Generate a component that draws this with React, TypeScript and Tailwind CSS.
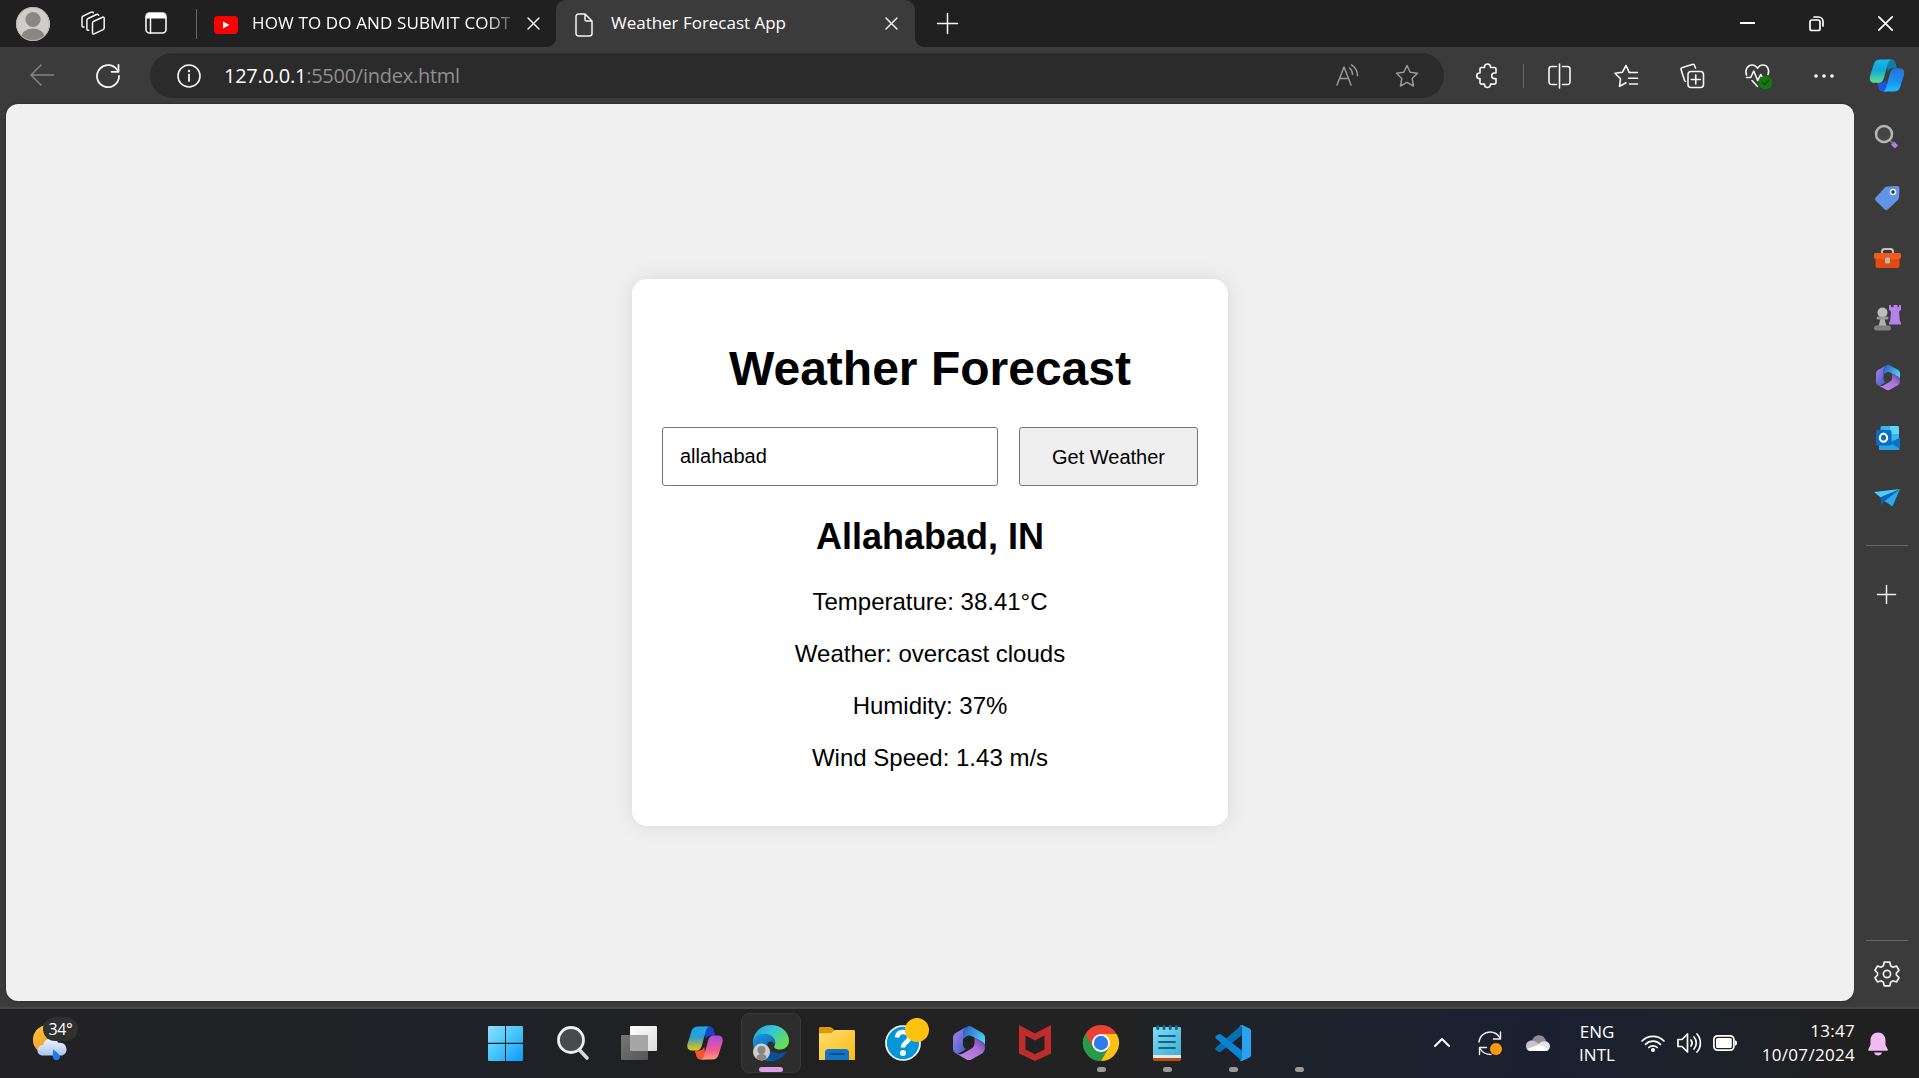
import type { ReactNode } from "react";

type IconProps = { w: number; h: number; className?: string; children: ReactNode };

function Icon({ w, h, className = "", children }: IconProps) {
  return (
    <svg
      width={w}
      height={h}
      viewBox={`0 0 ${w} ${h}`}
      fill="none"
      strokeLinecap="round"
      strokeLinejoin="round"
      className={`block shrink-0 overflow-visible ${className}`}
    >
      {children}
    </svg>
  );
}

const CloseIcon = ({ className }: { className?: string }) => (
  <Icon w={13} h={13} className={className}>
    <path d="M1 1l11 11M12 1L1 12" stroke="#f2f2f2" strokeWidth="1.5" />
  </Icon>
);

function Flare({ side }: { side: "left" | "right" }) {
  return (
    <svg
      width="9"
      height="9"
      viewBox="0 0 9 9"
      className={side === "left" ? "absolute bottom-0 -left-[9px]" : "absolute bottom-0 -right-[9px] -scale-x-100"}
    >
      <path d="M9 0V9H0A9 9 0 0 0 9 0Z" fill="#3b3b3b" />
    </svg>
  );
}

function TabStrip() {
  return (
    <div className="flex h-[47px] shrink-0 items-center bg-[#202020] text-[17px] text-white">
      <Icon w={34} h={34} className="ml-4">
        <defs>
          <clipPath id="avatar">
            <circle cx="17" cy="17" r="17" />
          </clipPath>
        </defs>
        <g clipPath="url(#avatar)">
          <rect width="34" height="34" fill="#cfccc9" />
          <circle cx="17" cy="12.5" r="7.6" fill="#8a8683" />
          <ellipse cx="17" cy="30" rx="11.5" ry="8.5" fill="#8a8683" />
        </g>
        <circle cx="17" cy="17" r="16.5" stroke="#b5b2af" />
      </Icon>
      <Icon w={24} h={24} className="-mt-px ml-[31px]">
        <g stroke="#f5f5f5" strokeWidth="1.5">
          <path d="M12.3 10.5l9.2-4.3c.9-.4 1.7 0 1.7 1v9.6c0 .8-.4 1.4-1.1 1.8l-9 4.3c-.9.4-1.6 0-1.6-1V12.400c0-.9.1-1.500.8-1.900z" />
          <path d="M7.800 19.200c-1.200.4-1.900 0-1.900-1.200V9.500c0-1 .4-1.600 1.200-2l8.400-4c1-.4 1.800-.2 2.100.8" />
          <path d="M3 16c-1.300.3-2 0-2-1.200V7c0-1 .4-1.600 1.200-2l8.100-3.900c1-.4 1.800-.2 2 .7" />
        </g>
      </Icon>
      <Icon w={22} h={22} className="-mt-px ml-10">
        <rect x="1" y="1" width="20" height="20" rx="3.500" stroke="#f5f5f5" strokeWidth="1.600" />
        <path d="M1 6.500V4a3 3 0 0 1 3-3h14a3 3 0 0 1 3 3v2.500z" fill="#fff" />
        <path d="M5.500 6v15" stroke="#f5f5f5" strokeWidth="1.500" />
      </Icon>
      <div className="ml-[29px] h-[30px] w-px bg-[#666]" />
      <Icon w={24} h={18} className="ml-[17px] mt-0.5">
        <rect width="24" height="18" rx="4" fill="#f00" />
        <path d="M9 5.500v7l6.500-3.500z" fill="#fff" />
      </Icon>
      <div className="ml-[14px] w-[261px] whitespace-nowrap pb-0.5 tracking-[0.13px] [mask-image:linear-gradient(to_right,#000_90%,transparent_102%)]">
        HOW TO DO AND SUBMIT CODT
      </div>
      <CloseIcon className="ml-[14px]" />
      <div className="relative ml-4 flex h-full w-[359px] items-center rounded-t-[10px] bg-[#3b3b3b]">
        <Flare side="left" />
        <Icon w={18} h={24} className="ml-[19px] mt-0.5">
          <path d="M3.500 1H10l7 7v12.500a2.500 2.500 0 0 1-2.500 2.500h-11A2.500 2.500 0 0 1 1 20.500v-17A2.500 2.500 0 0 1 3.500 1zM10 1v5.500A1.500 1.500 0 0 0 11.500 8H17" stroke="#f5f5f5" strokeWidth="1.500" />
        </Icon>
        <div className="ml-[18px] w-[200px] whitespace-nowrap pb-0.5 tracking-[-0.02px]">Weather Forecast App</div>
        <CloseIcon className="ml-[74px]" />
        <Flare side="right" />
      </div>
      <Icon w={21} h={21} className="-mt-px ml-[22px]">
        <path d="M10.500.5v20M.5 10.500h20" stroke="#f5f5f5" strokeWidth="1.500" />
      </Icon>
      <div className="ml-auto mr-[26px] flex items-center gap-[54px] pb-px">
        <Icon w={15} h={15}>
          <path d="M0 7h15" stroke="#fff" strokeWidth="2" strokeLinecap="butt" />
        </Icon>
        <Icon w={15} h={15}>
          <rect x="1" y="4" width="10" height="10.500" rx="2" stroke="#fff" strokeWidth="1.700" />
          <path d="M5 1h4.500A4.500 4.500 0 0 1 14 5.500V10" stroke="#fff" strokeWidth="1.700" />
        </Icon>
        <Icon w={15} h={15}>
          <path d="M.8.8l13.400 13.400M14.200.8L.8 14.200" stroke="#fff" strokeWidth="1.700" />
        </Icon>
      </div>
    </div>
  );
}

function CopilotMark({ w, h, id, tones }: { w: number; h: number; id: string; tones: string[] }) {
  return (
    <svg width={w} height={h} viewBox="0 0 36 34" className="block shrink-0">
      <defs>
        <linearGradient id={`${id}a`} x1="0" y1="0" x2="0" y2="1">
          <stop offset="0" stopColor={tones[0]} />
          <stop offset=".45" stopColor={tones[1]} />
          <stop offset="1" stopColor={tones[2]} />
        </linearGradient>
        <linearGradient id={`${id}b`} x1="0" y1="0" x2="0" y2="1">
          <stop offset="0" stopColor={tones[3]} />
          <stop offset=".6" stopColor={tones[4]} />
          <stop offset="1" stopColor={tones[5]} />
        </linearGradient>
      </defs>
      <path d="M17 .5h5.500c2.500 0 3.600 1.500 4.300 4l1.400 5H24c-3 0-4.500 1.500-5.200 4z" fill={tones[6]} />
      <path d="M19 33.500h-5.500c-2.500 0-3.600-1.500-4.300-4l-1.400-5H12c3 0 4.500-1.500 5.200-4z" fill={tones[7]} />
      <path d="M11.500.5h12c-2.700 0-3.900 1.700-4.700 4.500L15 19c-1.200 4-2.500 5.500-6 5.500H5C1 24.500-.5 21.500.6 17.500L4.500 5C5.500 2 7.500.5 11.500.5z" fill={`url(#${id}a)`} />
      <path d="M24.500 33.500h-12c2.700 0 3.900-1.700 4.700-4.500L21 15c1.200-4 2.500-5.500 6-5.500h4c4 0 5.500 3 4.400 7L31.500 29c-1 3-3 4.500-7 4.500z" fill={`url(#${id}b)`} />
    </svg>
  );
}

const starPath = "M12 1.500l3.200 6.800 7.300 1-5.300 5.200 1.300 7.500-6.500-3.600L5.500 22l1.300-7.500L1.500 9.300l7.300-1z";

function Toolbar() {
  return (
    <div className="flex h-[57px] shrink-0 items-center bg-[#3b3b3b]">
      <Icon w={24} h={22} className="-mt-px ml-[30px]">
        <path d="M23.500 11H1M11 1L1 11l10 10" stroke="#858585" strokeWidth="1.500" />
      </Icon>
      <Icon w={24} h={24} className="ml-[42px]">
        <path d="M22 7.500A11 11 0 1 0 23 12" stroke="#f5f5f5" strokeWidth="1.800" />
        <path d="M22.500.8v7H15.500" stroke="#f5f5f5" strokeWidth="1.800" />
      </Icon>
      <div className="ml-[30px] flex h-[45px] w-[1294px] items-center rounded-full bg-[#2b2b2b]">
        <Icon w={24} h={24} className="ml-[27px]">
          <circle cx="12" cy="12" r="11" stroke="#f5f5f5" strokeWidth="1.600" />
          <path d="M12 10.500V17" stroke="#f5f5f5" strokeWidth="1.800" />
          <circle cx="12" cy="7" r="1.200" fill="#f5f5f5" />
        </Icon>
        <div className="ml-[23px] whitespace-nowrap text-[20px] tracking-[-0.25px] text-[#8f8f8f]">
          <span className="text-white">127.0.0.1</span>:5500/index.html
        </div>
        <Icon w={23} h={22} className="ml-auto -mt-0.5">
          <path d="M1 21L8 3l7 18M3.500 14.500h9" stroke="#999" strokeWidth="1.500" />
          <path d="M13.500 4c2 1.500 3 3.500 3 6.500M15.500.8c4 2.500 6 6 6 11" stroke="#999" strokeWidth="1.500" />
        </Icon>
        <Icon w={24} h={24} className="mr-[25px] ml-9">
          <path d={starPath} stroke="#999" strokeWidth="1.500" />
        </Icon>
      </div>
      <Icon w={22} h={25} className="ml-[31px] mr-px">
        <path d="M6.500 4.500h3V4a3 3 0 0 1 6 0v.5h4a1.500 1.500 0 0 1 1.500 1.500v4h-1.500a2.800 2.800 0 0 0 0 5.600H21v4a1.500 1.500 0 0 1-1.500 1.500h-4v.4a3 3 0 0 1-6 0v-.4h-3A1.500 1.500 0 0 1 5 19.600v-4h-.5a2.800 2.800 0 0 1 0-5.600H5V6a1.500 1.500 0 0 1 1.500-1.500z" stroke="#f5f5f5" strokeWidth="1.600" />
      </Icon>
      <div className="ml-[25px] mr-px h-6 w-px bg-[#666]" />
      <Icon w={23} h={25} className="ml-[23px]">
        <path d="M8.500 3.500h-5A2.500 2.500 0 0 0 1 6v13a2.500 2.500 0 0 0 2.500 2.500h5M14.500 3.500h5A2.500 2.500 0 0 1 22 6v13a2.500 2.500 0 0 1-2.500 2.500h-5M11.500 1v24" stroke="#f5f5f5" strokeWidth="1.600" />
      </Icon>
      <Icon w={24} h={24} className="ml-[43px]">
        <path d="M8 21l-2.500 1.300 1-7.500L1 9.300l7.300-1L12 1.500l3.200 6.800M15 8.500h8.500M14.500 14.200h9M15.500 20h8M12 18.800l-4 2.200" stroke="#f5f5f5" strokeWidth="1.600" />
      </Icon>
      <Icon w={24} h={25} className="ml-[42px]">
        <rect x="8" y="8.500" width="15.500" height="16" rx="3" stroke="#f5f5f5" strokeWidth="1.600" />
        <path d="M15.750 12v9M11.250 16.500h9M15.500 5l-.8-2.300a2 2 0 0 0-2.500-1.300L2.500 4.500A2 2 0 0 0 1.200 7l3.300 10.300a2 2 0 0 0 1 1.100" stroke="#f5f5f5" strokeWidth="1.600" />
      </Icon>
      <Icon w={28} h={26} className="ml-[41px] mr-px">
        <path d="M12.500 23.500L7 17.500M1.500 12C-.5 6.500 3 2 7 2c2.500 0 4.500 1.500 5.500 3.500C13.500 3.500 15.500 2 18 2c4 0 7 4.500 5 9.500" stroke="#f5f5f5" strokeWidth="1.600" />
        <path d="M1.500 14.500h4.200l3-6.500 4 9.500 3-6 1.300 2" stroke="#f5f5f5" strokeWidth="1.600" />
        <circle cx="20.500" cy="19.500" r="6.800" fill="#107c10" />
        <path d="M17.500 19.700l2 2 4-4.300" stroke="#1e3c1e" strokeWidth="1.500" />
      </Icon>
      <Icon w={20} h={4} className="ml-10">
        <g fill="#fff">
          <circle cx="2" cy="2" r="1.800" />
          <circle cx="10" cy="2" r="1.800" />
          <circle cx="18" cy="2" r="1.800" />
        </g>
      </Icon>
      <div className="ml-[35px]">
        <CopilotMark w={36} h={33} id="cop" tones={["#19b9e8", "#10a6dc", "#63e08b", "#2a6fdc", "#1a93f0", "#1ac0ff", "#0d7fa8", "#2453e0"]} />
      </div>
    </div>
  );
}

function WeatherCard() {
  return (
    <div className="w-[596px] rounded-[15px] bg-white p-[30px] text-center text-2xl leading-[28px] text-black shadow-[0_0_20px_rgba(0,0,0,0.1)]">
      <h1 className="mt-8 mb-[31px] text-[48px] leading-[55px] font-bold">Weather Forecast</h1>
      <div className="flex justify-between text-[20px]">
        <input
          readOnly
          value="allahabad"
          className="h-[59px] w-[336px] rounded-[3px] border border-[#767676] bg-white px-[17px] outline-none"
        />
        <button className="h-[59px] w-[179px] rounded-[3px] border border-[#767676] bg-[#efefef]">Get Weather</button>
      </div>
      <h2 className="mt-[30px] mb-[31px] text-[36px] leading-[41px] font-bold">Allahabad, IN</h2>
      <div className="mb-6 flex flex-col gap-6">
        <p>Temperature: 38.41°C</p>
        <p>Weather: overcast clouds</p>
        <p>Humidity: 37%</p>
        <p>Wind Speed: 1.43 m/s</p>
      </div>
    </div>
  );
}

function M365Mark({ w, h, id }: { w: number; h: number; id: string }) {
  return (
    <svg width={w} height={h} viewBox="0 0 32 34" className="block shrink-0">
      <defs>
        <linearGradient id={`${id}l`} x1="0" y1="0" x2="1" y2="1">
          <stop offset="0" stopColor="#b67fe6" />
          <stop offset="1" stopColor="#2b5fc4" />
        </linearGradient>
        <linearGradient id={`${id}t`} x1="0" y1="0" x2="1" y2=".6">
          <stop offset="0" stopColor="#2a55c0" />
          <stop offset="1" stopColor="#46d3f5" />
        </linearGradient>
        <linearGradient id={`${id}b`} x1="0" y1="1" x2="1" y2="0">
          <stop offset="0" stopColor="#c58bea" />
          <stop offset=".6" stopColor="#a873d6" />
          <stop offset="1" stopColor="#5d3596" />
        </linearGradient>
      </defs>
      <path d="M14 .6L3 6.800C1 8 0 9.500 0 11.800v10.700c0 2.300 1 4 3 5l1.500.8 8.500-5c-2-1.200-3-2.800-3-5V8.500C10 4.500 11.500 2.500 14 .6z" fill={`url(#${id}l)`} />
      <path d="M10 13V8.500C10 4 12.500 1.500 14.500.4c1.200-.6 2.500-.5 3.700.2L29 6.800c2 1.200 3 2.700 3 5V20c-.3-2-1.300-3.300-3-4.300l-10-5.500c-2-1-4-.9-6 .3z" fill={`url(#${id}t)`} />
      <path d="M21.500 17v-5.400l7.500 4.200c4 2.400 4 9.200 0 11.600l-10.500 6c-1.700.9-3.400.9-5 0L3.500 27.800c2.500 1 4.700.8 7-.5l8-4.700c2-1.200 3-3 3-5.600z" fill={`url(#${id}b)`} />
    </svg>
  );
}

function Sidebar() {
  return (
    <div className="flex w-[65px] shrink-0 flex-col items-center bg-[#3b3b3b] pl-px">
      <Icon w={24} h={24} className="mt-[21px]">
        <path d="M17.500 18l4 4" stroke="#b47de8" strokeWidth="4.500" strokeLinecap="butt" />
        <path d="M15 15.500l2.500 2.500" stroke="#777" strokeWidth="2" />
        <circle cx="9" cy="9" r="8" stroke="#b5b5b5" strokeWidth="2.600" fill="#454545" />
      </Icon>
      <Icon w={25} h={24} className="mt-[37px] ml-px">
        <path d="M12 .5L22 0c1.600 0 2.500.9 2.500 2.500L24 11.500c0 1-.4 1.800-1.100 2.500L13 23.200c-1.200 1.100-2.500 1.100-3.600 0L1 15c-1.200-1.200-1.200-2.500 0-3.700L9.500 2C10.200 1 11 .6 12 .5z" fill="#6294e6" />
        <circle cx="18" cy="6" r="2.500" fill="#234" stroke="#e5eefc" strokeWidth="1.500" />
      </Icon>
      <Icon w={27} h={20} className="mt-[38px]">
        <path d="M8 5V3.500C8 2 9 1 10.500 1h6C18 1 19 2 19 3.500V5" stroke="#c4c4c4" strokeWidth="2" />
        <path d="M1.500 10h24v8c0 1.200-.8 2-2 2h-20c-1.200 0-2-.8-2-2z" fill="#e4490f" />
        <path d="M1.500 5h24c.8 0 1.500.7 1.500 1.500V9c0 1-.9 2-2 2H2c-1.100 0-2-1-2-2V6.500C0 5.700.7 5 1.500 5z" fill="#f05a1c" />
        <rect x="11" y="9.500" width="5" height="6" rx="1.500" fill="#b9b9b9" />
      </Icon>
      <Icon w={27} h={27} className="mt-[36px]">
        <path d="M15 1h2v2h2.500V1h4v2H25V1h2v5l-2 1.500.8 9L27 19v1.500H15V19l1.200-2.500.8-9L15 6z" fill="#b583e8" />
        <circle cx="8.500" cy="8.500" r="5" fill="#bdbdbd" />
        <path d="M4.500 22l2.500-9h3l2.500 9z" fill="#b0b0b0" />
        <rect x="2.500" y="12.500" width="12" height="3" rx="1.500" fill="#999" />
        <rect x="0" y="21.500" width="17" height="5" rx="2.500" fill="#808080" />
      </Icon>
      <div className="mt-[33px] ml-px">
        <M365Mark w={24} h={27} id="ms" />
      </div>
      <Icon w={24} h={24} className="mt-[35px] ml-px">
        <rect x="4.500" y="0" width="18.500" height="16" rx="1.500" fill="#34b5ee" />
        <path d="M14 0h7.500A1.500 1.500 0 0 1 23 1.500V8h-9z" fill="#5fd4fb" />
        <path d="M3 14h20.500v9c0 .6-.4 1-1 1H4c-.6 0-1-.4-1-1z" fill="#27a3e3" />
        <path d="M24 11.500V23L14 17z" fill="#0f72c0" />
        <rect x="0" y="4" width="15.500" height="15.500" rx="1.500" fill="#0a6cc4" />
        <ellipse cx="7.500" cy="11.700" rx="3.600" ry="4" stroke="#fff" strokeWidth="2.200" />
      </Icon>
      <Icon w={26} h={18} className="mt-[39px]">
        <path d="M0 3L26 0 8 9.500z" fill="#4bcdf8" />
        <path d="M7 8L26 0 11 12l-4 4.500z" fill="#0a62b0" />
        <path d="M26 0L18.500 17.500 10.500 12z" fill="#27a9ec" />
      </Icon>
      <div className="mt-[38px] h-px w-[42px] bg-[#666]" />
      <Icon w={19} h={19} className="mt-[39px] mr-0.5">
        <path d="M9.500.5v18M.5 9.500h18" stroke="#f0f0f0" strokeWidth="1.500" />
      </Icon>
      <div className="mt-auto h-px w-[42px] bg-[#666]" />
      <Icon w={26} h={26} className="mt-[20px] mb-[22px]">
        <path
          d="M10.200 1.200h5.600l.8 3.600 2.400 1.400 3.500-1.200 2.500 4.300-2.600 2.700v2l2.600 2.700-2.500 4.300-3.500-1.200-2.400 1.400-.8 3.600h-5.600l-.8-3.600L7 19.800 3.500 21 1 16.700 3.600 14v-2L1 9.300 3.500 5 7 6.200l2.400-1.400z"
          stroke="#ededed"
          strokeWidth="1.700"
        />
        <circle cx="13" cy="13" r="3.600" stroke="#ededed" strokeWidth="1.700" />
      </Icon>
    </div>
  );
}

function TaskSlot({ children, running = false }: { children?: ReactNode; running?: boolean }) {
  return (
    <div className="relative flex h-full w-[66px] items-center justify-center pb-px">
      {children}
      {running && <div className="absolute bottom-[6px] left-[29px] h-[5px] w-[9px] rounded-full bg-[#9a9a9a]" />}
    </div>
  );
}

function Taskbar() {
  return (
    <div className="flex h-[69px] shrink-0 items-center bg-[linear-gradient(90deg,#222224_0%,#202124_12%,#1e2127_25%,#212122_35%,#222222_58%,#1c222c_68%,#1b2030_80%,#1c212c_88%,#202021_95%,#202020_100%)] text-[17px] text-white">
      <div className="relative ml-8 h-[45px] w-[48px]">
        <Icon w={34} h={37} className="absolute top-1 left-px">
          <defs>
            <linearGradient id="moon" x1="0" y1="0" x2="1" y2="1">
              <stop offset="0" stopColor="#ffc93d" />
              <stop offset="1" stopColor="#ee8420" />
            </linearGradient>
            <linearGradient id="cloud" x1="0" y1="0" x2="0" y2="1">
              <stop offset="0" stopColor="#f0f5ff" />
              <stop offset="1" stopColor="#a9c4f0" />
            </linearGradient>
          </defs>
          <path d="M11 .5C3 3 0 9 0 15c0 8 6 13.500 14 13.500 7 0 13-3 16-9.500-12 1-20-6-19-18.500z" fill="url(#moon)" />
          <path d="M10 30.500c-3 0-5.500-1.500-5.500-5s2.800-5.500 5.800-5.500C11 16 14 13.500 18 13.500c3.300 0 6 1.700 7.300 4.300C30 17 33.500 20 33.500 24.200c0 4-2.500 6.300-6 6.300z" fill="url(#cloud)" />
          <path d="M20 24.500c3 2 7 4.500 7 8a3.700 3.700 0 0 1-7 .5z" fill="#1c7bf5" />
        </Icon>
        <div className="absolute -top-1 left-[11px] flex h-[24px] w-[35px] items-center justify-center rounded-full bg-[#303030] pb-px text-[16px] tracking-[-0.3px]">
          34°
        </div>
      </div>
      <div className="ml-[394px] flex h-full">
        <TaskSlot>
          <Icon w={35} h={35} className="mr-[3px]">
            <defs>
              <linearGradient id="win" gradientUnits="userSpaceOnUse" x1="0" y1="0" x2="35" y2="35">
                <stop offset="0" stopColor="#8fe0ff" />
                <stop offset=".45" stopColor="#4cc9fb" />
                <stop offset="1" stopColor="#0d98fa" />
              </linearGradient>
            </defs>
            <path d="M1 0h16v16.800H0V1a1 1 0 0 1 1-1zM18 0h16a1 1 0 0 1 1 1v15.800H18zM0 18h17v17H1a1 1 0 0 1-1-1zM18 18h17v16a1 1 0 0 1-1 1H18z" fill="url(#win)" />
          </Icon>
        </TaskSlot>
        <TaskSlot>
          <Icon w={32} h={34}>
            <path d="M22.500 24l7.500 8" stroke="#d5d9dc" strokeWidth="3.600" />
            <circle cx="14" cy="14" r="12.500" stroke="#eceeef" strokeWidth="2.800" fill="#4a4a4c" />
          </Icon>
        </TaskSlot>
        <TaskSlot>
          <Icon w={36} h={34}>
            <defs>
              <linearGradient id="tv1" x1="0" y1="0" x2="1" y2="1">
                <stop offset="0" stopColor="#fff" />
                <stop offset="1" stopColor="#dcdcdc" />
              </linearGradient>
              <linearGradient id="tv2" x1="0" y1="0" x2="1" y2="1">
                <stop offset="0" stopColor="#757575" />
                <stop offset="1" stopColor="#565656" />
              </linearGradient>
            </defs>
            <rect x="9" y="0" width="27" height="25" rx="1" fill="url(#tv1)" />
            <rect x="0" y="9" width="27" height="25" rx="1" fill="url(#tv2)" />
            <path d="M9 9h17a1 1 0 0 1 1 1v15H10a1 1 0 0 1-1-1z" fill="#a6a6a6" />
          </Icon>
        </TaskSlot>
        <TaskSlot>
          <CopilotMark w={36} h={34} id="copt" tones={["#19a7ee", "#2f9bd0", "#eec80c", "#a94be8", "#f0598f", "#ff9a76", "#1546c8", "#f4572f"]} />
        </TaskSlot>
        <div className="relative mx-[3px] mt-1 flex size-[60px] items-center justify-center rounded-lg border border-[#3a3a3a] bg-[#2d2d2d]">
          <Icon w={36} h={36}>
            <defs>
              <linearGradient id="edgeTop" x1="0" y1="0" x2="1" y2=".6">
                <stop offset="0" stopColor="#1f9fe0" />
                <stop offset=".5" stopColor="#35c6d6" />
                <stop offset="1" stopColor="#66e04f" />
              </linearGradient>
              <linearGradient id="edgeLow" x1="0" y1="0" x2=".6" y2="1">
                <stop offset="0" stopColor="#1a9ae3" />
                <stop offset="1" stopColor="#0b5cb0" />
              </linearGradient>
            </defs>
            <path d="M33.500 26.500C31 32 25.500 36 18.500 36c-7 0-11-5-9.500-12 .7-3.500 3-7 6.500-8.500-2 4-.5 9 3.500 11 4.500 2.400 10 2 14.500 0z" fill="#0d4f97" />
            <path d="M0 17C1 11 6 9 11 9c6.500 0 11 4 11 8.500 0 .8-.2 1.500-.4 2C20 15 16 16 14 18.500c-5 6.500-1 15 7 17.300C9 38 0 29 0 18z" fill="url(#edgeLow)" />
            <path d="M0 17C.5 7 8.500 0 18 0c10.500 0 18 7.500 18 15.500 0 6-4.500 9-9 9-3.500 0-6-1.300-6-2.700 0-.8 1.300-1.500 1.300-4C22.300 13 17.500 9 11.500 9 6 9 1.500 11.500 0 17z" fill="url(#edgeTop)" />
            <circle cx="8.500" cy="27" r="8.500" fill="#d0cdca" />
            <circle cx="8.500" cy="25" r="4" fill="#8a8683" />
            <path d="M3.300 33.300c.5-3.300 2.500-4.300 5.200-4.300s4.700 1 5.200 4.300a8.500 8.500 0 0 1-10.400 0z" fill="#8a8683" />
          </Icon>
          <div className="absolute bottom-0 h-[5px] w-6 rounded-full bg-[#dc9ee4]" />
        </div>
        <TaskSlot>
          <Icon w={36} h={33}>
            <defs>
              <linearGradient id="fold" x1="0" y1="0" x2="1" y2="1">
                <stop offset="0" stopColor="#ffde70" />
                <stop offset="1" stopColor="#fbb917" />
              </linearGradient>
            </defs>
            <path d="M1.500 0h9c1 0 1.500.2 2.200.8L16 3.500V8H0V1.500C0 .7.700 0 1.500 0z" fill="#dc9a0a" />
            <path d="M0 6.200h11c1 0 1.500-.2 2.200-.8L15 3.800c.4-.5 1-.8 2-.8h17.500c.8 0 1.500.7 1.500 1.500V33H0z" fill="url(#fold)" />
            <path d="M6 33v-7.500C6 23.500 7.500 22 9.500 22h17c2 0 3.500 1.500 3.500 3.500V33z" fill="#0d74c8" />
            <path d="M11 27h14" stroke="#084a8a" strokeWidth="1.800" />
          </Icon>
        </TaskSlot>
        <TaskSlot>
          <Icon w={36} h={36}>
            <circle cx="18" cy="18" r="17" fill="#0497d8" stroke="#fff" strokeWidth="1.700" />
            <path d="M12 12.500C12.500 8.500 15 7 18 7c4 0 6.300 2.300 6.300 5.300 0 5-6.300 5-6.300 10.200" stroke="#fff" strokeWidth="4.500" strokeLinecap="butt" />
            <circle cx="18" cy="28" r="3" fill="#fff" />
            <circle cx="32" cy="5" r="12" fill="#ffc20e" />
          </Icon>
        </TaskSlot>
        <TaskSlot>
          <M365Mark w={32} h={34} id="mt" />
        </TaskSlot>
        <TaskSlot>
          <Icon w={32} h={36}>
            <path d="M0 0l16 8.500L32 0v28.500L16 36 0 28.500zM6.500 10.500V24.500l9.500 4.800 9.500-4.800V10.500L16 15.500z" fill="#c02b2b" fillRule="evenodd" />
          </Icon>
        </TaskSlot>
        <TaskSlot running>
          <Icon w={36} h={36}>
            <path d="M18 18L2.400 9A18 18 0 0 1 33.600 9z" fill="#e94234" />
            <path d="M18 18L2.400 9A18 18 0 0 0 18 36l8-13z" fill="#289a49" />
            <path d="M18 9h15.600A18 18 0 0 1 18 36l7.800-13.500z" fill="#fbc116" />
            <path d="M2.400 9L10.200 22.500 18 18V9z" fill="#e94234" />
            <path d="M2.400 9L10.200 22.500 16 27 18 36A18 18 0 0 1 2.400 9z" fill="#289a49" />
            <circle cx="18" cy="18" r="9" fill="#fff" />
            <circle cx="18" cy="18" r="7.200" fill="#2f7bee" />
          </Icon>
        </TaskSlot>
        <TaskSlot running>
          <Icon w={28} h={36}>
            <defs>
              <linearGradient id="note" x1="0" y1="0" x2="1" y2="1">
                <stop offset="0" stopColor="#83dcf5" />
                <stop offset="1" stopColor="#41add4" />
              </linearGradient>
            </defs>
            <path d="M0 31h28v3.500c0 .8-.7 1.500-1.500 1.500h-25C.7 36 0 35.300 0 34.500z" fill="#b4530f" />
            <path d="M0 28h28v5H0z" fill="#e6e6e6" />
            <path d="M1 2h26a1 1 0 0 1 1 1v27H0V3a1 1 0 0 1 1-1z" fill="url(#note)" />
            <path d="M4.800 1.500v2M11 1.500v2M17.200 1.500v2M23.400 1.500v2" stroke="#0b6a8c" strokeWidth="3" />
            <path d="M6 11h16M6 17h16M6 23h16" stroke="#0b6a8c" strokeWidth="1.800" />
          </Icon>
        </TaskSlot>
        <TaskSlot running>
          <Icon w={36} h={36}>
            <path d="M1 22.500L26.500 0v10.500L6 26.500c-1 .7-2 .7-3 0L1 25c-1-.8-1-1.700 0-2.500z" fill="#0570b5" />
            <path d="M1 11L3 9.500c1-.7 2-.7 3 0L27 25.500V36L1 13.500c-1-.8-1-1.700 0-2.500z" fill="#0a84d2" />
            <path d="M27 0l7.500 3.600c1 .5 1.500 1.200 1.500 2.400v24c0 1.200-.5 1.900-1.500 2.400L27 36c-1 0-2-.5-3-1.500 1.500.8 3 0 3-2V3.500c0-2-1.500-2.800-3-2C25 .5 26 0 27 0z" fill="#27a3f2" />
          </Icon>
        </TaskSlot>
        <TaskSlot running />
      </div>
      <div className="ml-auto mr-[31px] flex h-full items-center pb-0.5">
        <Icon w={16} h={9} className="mr-7">
          <path d="M1 8l7-7 7 7" stroke="#fff" strokeWidth="2" />
        </Icon>
        <Icon w={24} h={24} className="mr-6 mt-px">
          <path d="M1 11C1.500 5 6.500 1 12 1c4.500 0 8 2.500 10 6M22.500 1v7h-7M13 23.500C8 23.500 4 21 2 17.500M1.500 23.500v-7h7" stroke="#f0f0f0" strokeWidth="1.400" />
          <circle cx="18" cy="18" r="6" fill="#ff9a0a" />
        </Icon>
        <Icon w={24} h={16} className="mr-7 mt-px">
          <path d="M6 6.500C7 2.500 9.500.3 13 .3c3.500 0 6.200 2.400 7 5.700l-7 4z" fill="#8c8c92" />
          <path d="M5 16c-3 0-5-2-5-5 0-3.200 2.500-5.500 5.500-5.500 1.800 0 3 .5 4.500 1.500l8 4.500L8 16z" fill="#c6c6ca" />
          <path d="M12.500 9.500c1.500-2.300 3.500-3.300 6-3.300 3.200 0 5.500 2 5.500 5 0 3-2 4.800-5 4.800z" fill="#e3e3e5" />
          <path d="M1.200 14L13 9.500l10 4.500c-1 1.300-2.300 2-4 2H5c-1.500 0-2.800-.7-3.800-2z" fill="#fff" />
        </Icon>
        <div className="mr-[25px] w-[38px] text-center leading-[23px] tracking-[0px]">
          ENG
          <br />
          INTL
        </div>
        <Icon w={24} h={18} className="mr-3">
          <path d="M1 7A15.500 15.500 0 0 1 23 7M4.500 10.300a10.600 10.600 0 0 1 15 0M7.800 13.500a6 6 0 0 1 8.400 0" stroke="#fff" strokeWidth="1.700" />
          <circle cx="12" cy="16" r="2" fill="#fff" />
        </Icon>
        <Icon w={24} h={20} className="mr-3">
          <path d="M1 6.500h4L10.500 1v18L5 13.500H1zM14 7c1.300 1.800 1.300 4.200 0 6M17 4c3 3.500 3 8.500 0 12M20 1c4.500 5 4.500 13 0 18" stroke="#fff" strokeWidth="1.700" />
        </Icon>
        <Icon w={24} h={16} className="mr-[23px]">
          <rect x=".9" y=".9" width="20" height="14.200" rx="3.500" stroke="#fff" strokeWidth="1.700" />
          <rect x="3" y="3" width="15.800" height="10" rx="1.500" fill="#fff" />
          <path d="M22 5.500c1 0 2 .5 2 2.500s-1 2.500-2 2.500z" fill="#fff" />
        </Icon>
        <div className="mr-[13px] w-[95px] text-right leading-[24px] whitespace-nowrap tracking-[0.3px]">
          13:47
          <br />
          10/07/2024
        </div>
        <Icon w={20} h={24} className="mt-0.5">
          <path d="M10 .5c4.500 0 7.500 3.500 7.500 8V13l2.300 4.500c.3.700 0 1.200-.7 1.200H.9c-.7 0-1-.5-.7-1.200L2.500 13V8.500C2.500 4 5.500.5 10 .5z" fill="#f0bcf3" />
          <path d="M6 20.500h8c-.5 2-2 3-4 3s-3.500-1-4-3z" fill="#f0bcf3" />
        </Icon>
      </div>
    </div>
  );
}

export default function App() {
  return (
    <div className="flex h-[1078px] w-[1919px] flex-col overflow-hidden bg-[#3b3b3b] font-['Open_Sans','Noto_Sans',sans-serif]">
      <TabStrip />
      <Toolbar />
      <div className="flex min-h-0 flex-1">
        <main className="mb-2 ml-1.5 flex w-[1848px] items-center justify-center rounded-xl bg-[#f0f0f0] font-['Liberation_Sans',Arial,sans-serif] shadow-[0_0_3px_rgba(0,0,0,0.4)]">
          <WeatherCard />
        </main>
        <Sidebar />
      </div>
      <div className="-mt-0.5 h-0.5 shrink-0 bg-[#464646]" />
      <Taskbar />
    </div>
  );
}
